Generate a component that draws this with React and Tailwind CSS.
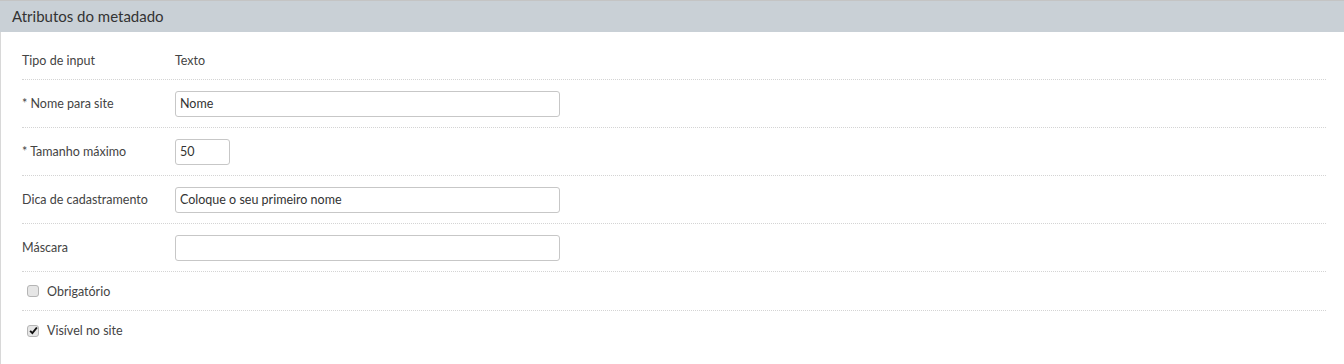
import React from "react";

const Row = ({ label, children, h = "h-12" }) => (
  <div className={`flex items-center ${h} border-b border-dotted border-[#d4d4d4]`}>
    <div className="w-[153px] shrink-0 pt-[2px]">{label}</div>
    <div className="flex-1">{children}</div>
  </div>
);

const TextInput = ({ value, className }) => (
  <input
    type="text"
    defaultValue={value}
    className={`h-[26px] border border-[#c7c7c7] rounded-[3px] px-[4px] text-[12.5px] text-[#333] outline-none ${className}`}
  />
);

const Check = ({ checked, label }) => (
  <label className="flex items-center h-full pl-[5px] gap-[8px]">
    <span className="w-[12px] h-[12px] rounded-[3px] border border-[#b5b5b5] bg-[#e6e6e6] flex items-center justify-center">
      {checked && (
        <svg viewBox="0 0 12 12" className="w-[9px] h-[9px]">
          <path d="M1.5 6.5 L4.5 9.5 L10.5 2" fill="none" stroke="#111" strokeWidth="2.6" />
        </svg>
      )}
    </span>
    <span className="pt-[2px]">{label}</span>
  </label>
);

export default function App() {
  return (
    <div className="w-[1344px] h-[364px] bg-white text-[12.5px] text-[#444]" style={{ fontFamily: "Lato, 'Noto Sans', sans-serif" }}>
      <div className="h-[32px] bg-[#c9d0d6] border-t border-[#c4c4c4] flex items-center px-[12px] text-[15px] text-[#333]">
        Atributos do metadado
      </div>
      <div className="border-l border-[#d8d8d8] h-[332px] pl-[21px] pr-[18px] pt-[9px]">
        <Row label="Tipo de input" h="h-[39px]"><span className="inline-block pt-[2px]">Texto</span></Row>
        <Row label="* Nome para site"><TextInput value="Nome" className="w-[385px]" /></Row>
        <Row label="* Tamanho máximo"><TextInput value="50" className="w-[55px]" /></Row>
        <Row label="Dica de cadastramento"><TextInput value="Coloque o seu primeiro nome" className="w-[385px]" /></Row>
        <Row label="Máscara"><TextInput value="" className="w-[385px]" /></Row>
        <div className="h-[39px] border-b border-dotted border-[#d4d4d4]">
          <Check label="Obrigatório" />
        </div>
        <div className="h-[39px]">
          <Check checked label="Visível no site" />
        </div>
      </div>
    </div>
  );
}
